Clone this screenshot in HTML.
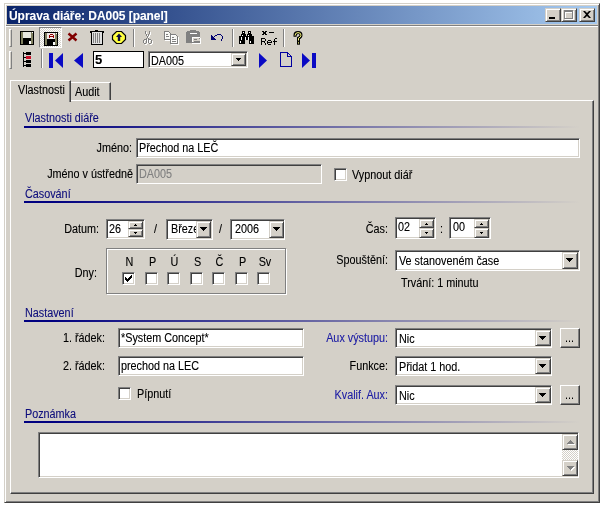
<!DOCTYPE html>
<html><head><meta charset="utf-8">
<style>
*{box-sizing:border-box;margin:0;padding:0}
html,body{width:606px;height:508px;overflow:hidden;background:#fff;position:relative}
body{font-family:"Liberation Sans",sans-serif;font-size:11px;color:#000}
.a{position:absolute}
.t{position:absolute;white-space:nowrap;line-height:13px;font-size:12px;margin-top:1px;filter:url(#crisp);transform:scaleX(0.9);transform-origin:0 0}
.r{text-align:right;transform-origin:100% 0}
.nav{color:#10107c}
.blu{color:#1c1ca4}
/* sunken field */
.fld{position:absolute;background:#fff;border:1px solid;border-color:#808080 #fff #fff #808080;box-shadow:inset 1px 1px #404040,inset -1px -1px #d4d0c8}
.fld.dis{background:#d4d0c8}
/* raised small button (scroll / combo) */
.btn{position:absolute;background:#d4d0c8;border:1px solid;border-color:#d4d0c8 #404040 #404040 #d4d0c8;box-shadow:inset 1px 1px #fff,inset -1px -1px #808080}
.pbtn{position:absolute;background:#d4d0c8;border:1px solid;border-color:#fff #404040 #404040 #fff;box-shadow:inset -1px -1px #808080}
.cb{position:absolute;width:13px;height:13px;background:#fff;border:1px solid;border-color:#808080 #fff #fff #808080;box-shadow:inset 1px 1px #404040,inset -1px -1px #d4d0c8}
.grip{position:absolute;width:3px;border-left:1px solid #fff;border-top:1px solid #fff;border-right:1px solid #808080;border-bottom:1px solid #808080}
.sep{position:absolute;width:2px;border-left:1px solid #808080;border-right:1px solid #fff}
.hline{position:absolute;height:2px;background:linear-gradient(to right,#000080 0%,#000080 5%,#d4d0c8 100%)}
.arr{position:absolute;width:0;height:0;border-left:3px solid transparent;border-right:3px solid transparent}
.dn{border-top:3px solid #000}
.up{border-bottom:3px solid #000}
svg{position:absolute;overflow:visible}
</style></head><body>
<svg width="0" height="0" style="position:absolute"><filter id="crisp" x="-5%" y="-5%" width="110%" height="110%"><feComponentTransfer><feFuncA type="gamma" amplitude="1" exponent="0.8" offset="0"/></feComponentTransfer></filter></svg>

<!-- window frame -->
<div class="a" style="left:4px;top:3px;width:596px;height:500px;background:#d4d0c8;border:1px solid;border-color:#d4d0c8 #404040 #404040 #d4d0c8;box-shadow:inset 1px 1px #fff,inset -1px -1px #808080"></div>

<!-- title bar -->
<div class="a" style="left:7px;top:6px;width:590px;height:18px;background:linear-gradient(to right,#0a246a,#a6caf0)"></div>
<div class="t" style="left:9px;top:8px;color:#fff;font-weight:bold;font-size:12px;line-height:14px;letter-spacing:-0.05px;transform:none">Úprava diáře: DA005 [panel]</div>
<div class="btn" style="left:545px;top:8px;width:16px;height:14px"><div class="a" style="left:3px;top:8px;width:6px;height:2px;background:#000"></div></div>
<div class="btn" style="left:561px;top:8px;width:16px;height:14px"><div class="a" style="left:3px;top:2px;width:9px;height:9px;border:1px solid #fff;border-top-width:2px"></div><div class="a" style="left:2px;top:1px;width:9px;height:9px;border:1px solid #808080;border-top-width:2px"></div></div>
<div class="btn" style="left:579px;top:8px;width:16px;height:14px">
<svg style="left:3px;top:2px" width="8" height="7" viewBox="0 0 8 7"><path d="M0 0h2l2 2 2-2h2L5 3.5 8 7H6L4 5 2 7H0l3-3.5z" fill="#000"/></svg></div>

<!-- toolbar top etched line -->
<div class="a" style="left:6px;top:25px;width:592px;height:1px;background:#808080"></div>
<div class="a" style="left:6px;top:26px;width:592px;height:1px;background:#fff"></div>

<!-- toolbar row 1 -->
<div class="grip" style="left:9px;top:29px;height:18px"></div>
<!-- save -->
<svg style="left:20px;top:31px" width="14" height="14" viewBox="0 0 14 14" shape-rendering="crispEdges">
<rect x="0" y="0" width="14" height="14" fill="#000"/>
<rect x="1" y="1" width="12" height="12" fill="#808060"/>
<rect x="3" y="1" width="8" height="6" fill="#e8e8e0"/>
<rect x="3" y="7" width="8" height="6" fill="#000"/>
<rect x="9" y="10" width="2" height="3" fill="#fff"/>
<rect x="12" y="1" width="1" height="1" fill="#fff"/>
</svg>
<!-- checked save-as button -->
<div class="a" style="left:39px;top:27px;width:23px;height:21px;border:1px solid;border-color:#808080 #fff #fff #808080;background-color:#e8e6e0;background-image:repeating-conic-gradient(#fff 0 25%,#d4d0c8 0 50%);background-size:2px 2px"></div>
<svg style="left:44px;top:32px" width="14" height="14" viewBox="0 0 14 14" shape-rendering="crispEdges">
<rect x="0" y="0" width="14" height="14" fill="#000"/>
<rect x="1" y="1" width="12" height="12" fill="#808060"/>
<rect x="3" y="1" width="8" height="6" fill="#f0e8e8"/>
<path d="M6 2h3v1h-3zM5 3h1v3h-1zM9 3h1v3h-1zM6 4h3v1h-3z" fill="#900000"/>
<rect x="3" y="7" width="8" height="6" fill="#000"/>
<rect x="9" y="10" width="2" height="3" fill="#fff"/>
<rect x="12" y="1" width="1" height="1" fill="#fff"/>
</svg>
<!-- red x -->
<svg style="left:68px;top:33px" width="9" height="8" viewBox="0 0 9 8"><path d="M0.5 0.5L8.5 7.5M8.5 0.5L0.5 7.5" stroke="#800000" stroke-width="2.4"/></svg>
<!-- trash -->
<svg style="left:90px;top:30px" width="14" height="15" viewBox="0 0 14 15" shape-rendering="crispEdges">
<rect x="5" y="0" width="3" height="1" fill="#000"/>
<rect x="0" y="1" width="14" height="1" fill="#000"/>
<rect x="0" y="2" width="1" height="1" fill="#000"/><rect x="13" y="2" width="1" height="1" fill="#000"/>
<rect x="1" y="2" width="12" height="13" fill="#000"/>
<rect x="2" y="2" width="10" height="12" fill="#e0e0e0"/>
<rect x="3" y="3" width="1" height="10" fill="#808080"/>
<rect x="5" y="3" width="1" height="10" fill="#808080"/>
<rect x="7" y="3" width="1" height="10" fill="#808080"/>
<rect x="9" y="3" width="1" height="10" fill="#808080"/>
</svg>
<!-- octagon -->
<svg style="left:112px;top:31px" width="14" height="13" viewBox="0 0 14 13">
<path d="M4.5 0.5h5l4 4v4l-4 4h-5l-4-4v-4z" fill="#ffff40" stroke="#000" stroke-width="1.2"/>
<path d="M7 2.5L10 6H8.2v4H5.8V6H4z" fill="#101040"/>
</svg>
<div class="sep" style="left:133px;top:29px;height:18px"></div>
<!-- scissors (disabled) -->
<svg style="left:142px;top:30px" width="12" height="15" viewBox="0 0 12 15" shape-rendering="crispEdges"><path d="M4 2h1v1h-1zM8 2h1v1h-1zM4 3h1v1h-1zM8 3h1v1h-1zM4 4h1v1h-1zM8 4h1v1h-1zM5 5h1v1h-1zM7 5h1v1h-1zM5 6h1v1h-1zM7 6h1v1h-1zM6 7h1v1h-1zM6 8h1v1h-1zM5 9h1v1h-1zM7 9h1v1h-1zM3 10h1v1h-1zM4 10h1v1h-1zM5 10h1v1h-1zM7 10h1v1h-1zM8 10h1v1h-1zM9 10h1v1h-1zM2 11h1v1h-1zM5 11h1v1h-1zM7 11h1v1h-1zM10 11h1v1h-1zM2 12h1v1h-1zM5 12h1v1h-1zM7 12h1v1h-1zM10 12h1v1h-1zM2 13h1v1h-1zM5 13h1v1h-1zM7 13h1v1h-1zM10 13h1v1h-1zM3 14h1v1h-1zM4 14h1v1h-1zM8 14h1v1h-1zM9 14h1v1h-1z" fill="#fff"/><path d="M3 1h1v1h-1zM7 1h1v1h-1zM3 2h1v1h-1zM7 2h1v1h-1zM3 3h1v1h-1zM7 3h1v1h-1zM4 4h1v1h-1zM6 4h1v1h-1zM4 5h1v1h-1zM6 5h1v1h-1zM5 6h1v1h-1zM5 7h1v1h-1zM4 8h1v1h-1zM6 8h1v1h-1zM2 9h1v1h-1zM3 9h1v1h-1zM4 9h1v1h-1zM6 9h1v1h-1zM7 9h1v1h-1zM8 9h1v1h-1zM1 10h1v1h-1zM4 10h1v1h-1zM6 10h1v1h-1zM9 10h1v1h-1zM1 11h1v1h-1zM4 11h1v1h-1zM6 11h1v1h-1zM9 11h1v1h-1zM1 12h1v1h-1zM4 12h1v1h-1zM6 12h1v1h-1zM9 12h1v1h-1zM2 13h1v1h-1zM3 13h1v1h-1zM7 13h1v1h-1zM8 13h1v1h-1z" fill="#808080"/></svg>
<!-- copy -->
<svg style="left:164px;top:31px" width="16" height="14" viewBox="0 0 16 14" shape-rendering="crispEdges"><path d="M1 1h4v1h1v1h1v5h-6zM7 4h5v1h1v1h1v6h-7z" fill="#f4f4f0"/><path d="M1 1h1v1h-1zM2 1h1v1h-1zM3 1h1v1h-1zM4 1h1v1h-1zM5 1h1v1h-1zM1 2h1v1h-1zM6 2h1v1h-1zM1 3h1v1h-1zM7 3h1v1h-1zM1 4h1v1h-1zM3 4h1v1h-1zM4 4h1v1h-1zM7 4h1v1h-1zM8 4h1v1h-1zM9 4h1v1h-1zM10 4h1v1h-1zM11 4h1v1h-1zM12 4h1v1h-1zM1 5h1v1h-1zM7 5h1v1h-1zM13 5h1v1h-1zM1 6h1v1h-1zM3 6h1v1h-1zM4 6h1v1h-1zM5 6h1v1h-1zM7 6h1v1h-1zM14 6h1v1h-1zM1 7h1v1h-1zM7 7h1v1h-1zM9 7h1v1h-1zM10 7h1v1h-1zM14 7h1v1h-1zM1 8h1v1h-1zM7 8h1v1h-1zM14 8h1v1h-1zM1 9h1v1h-1zM2 9h1v1h-1zM3 9h1v1h-1zM4 9h1v1h-1zM5 9h1v1h-1zM6 9h1v1h-1zM7 9h1v1h-1zM9 9h1v1h-1zM10 9h1v1h-1zM11 9h1v1h-1zM12 9h1v1h-1zM14 9h1v1h-1zM7 10h1v1h-1zM14 10h1v1h-1zM7 11h1v1h-1zM9 11h1v1h-1zM10 11h1v1h-1zM11 11h1v1h-1zM12 11h1v1h-1zM14 11h1v1h-1zM7 12h1v1h-1zM14 12h1v1h-1zM7 13h1v1h-1zM8 13h1v1h-1zM9 13h1v1h-1zM10 13h1v1h-1zM11 13h1v1h-1zM12 13h1v1h-1zM13 13h1v1h-1zM14 13h1v1h-1z" fill="#fff"/><path d="M0 0h1v1h-1zM1 0h1v1h-1zM2 0h1v1h-1zM3 0h1v1h-1zM4 0h1v1h-1zM0 1h1v1h-1zM5 1h1v1h-1zM0 2h1v1h-1zM6 2h1v1h-1zM0 3h1v1h-1zM2 3h1v1h-1zM3 3h1v1h-1zM6 3h1v1h-1zM7 3h1v1h-1zM8 3h1v1h-1zM9 3h1v1h-1zM10 3h1v1h-1zM11 3h1v1h-1zM0 4h1v1h-1zM6 4h1v1h-1zM12 4h1v1h-1zM0 5h1v1h-1zM2 5h1v1h-1zM3 5h1v1h-1zM4 5h1v1h-1zM6 5h1v1h-1zM13 5h1v1h-1zM0 6h1v1h-1zM6 6h1v1h-1zM8 6h1v1h-1zM9 6h1v1h-1zM13 6h1v1h-1zM0 7h1v1h-1zM6 7h1v1h-1zM13 7h1v1h-1zM0 8h1v1h-1zM1 8h1v1h-1zM2 8h1v1h-1zM3 8h1v1h-1zM4 8h1v1h-1zM5 8h1v1h-1zM6 8h1v1h-1zM8 8h1v1h-1zM9 8h1v1h-1zM10 8h1v1h-1zM11 8h1v1h-1zM13 8h1v1h-1zM6 9h1v1h-1zM13 9h1v1h-1zM6 10h1v1h-1zM8 10h1v1h-1zM9 10h1v1h-1zM10 10h1v1h-1zM11 10h1v1h-1zM13 10h1v1h-1zM6 11h1v1h-1zM13 11h1v1h-1zM6 12h1v1h-1zM7 12h1v1h-1zM8 12h1v1h-1zM9 12h1v1h-1zM10 12h1v1h-1zM11 12h1v1h-1zM12 12h1v1h-1zM13 12h1v1h-1z" fill="#808080"/></svg>
<!-- paste -->
<svg style="left:186px;top:30px" width="16" height="14" viewBox="0 0 16 14" shape-rendering="crispEdges">
<path d="M1 1h12v1h1v11h-14v-11h1z" fill="#808080"/>
<rect x="4" y="0" width="6" height="1" fill="#808080"/>
<rect x="4" y="3" width="7" height="1" fill="#fff"/>
<rect x="6" y="7" width="8" height="6" fill="#fff"/>
<rect x="7" y="8" width="7" height="5" fill="#d4d0c8"/>
<path d="M14 8h1v5h-1zM6 13h9v1h-9z" fill="#fff"/>
<rect x="13" y="8" width="1" height="1" fill="#808080"/>
<rect x="8" y="9" width="3" height="1" fill="#808080"/>
<rect x="8" y="11" width="6" height="1" fill="#808080"/>
<rect x="6" y="12" width="8" height="1" fill="#808080"/>
</svg>
<!-- undo -->
<svg style="left:211px;top:34px" width="12" height="7" viewBox="0 0 12 7" shape-rendering="crispEdges"><path d="M6 0h1v1h-1zM7 0h1v1h-1zM8 0h1v1h-1zM9 0h1v1h-1zM0 1h1v1h-1zM4 1h1v1h-1zM5 1h1v1h-1zM10 1h1v1h-1zM0 2h1v1h-1zM1 2h1v1h-1zM3 2h1v1h-1zM11 2h1v1h-1zM0 3h1v1h-1zM1 3h1v1h-1zM2 3h1v1h-1zM11 3h1v1h-1zM0 4h1v1h-1zM1 4h1v1h-1zM2 4h1v1h-1zM3 4h1v1h-1zM11 4h1v1h-1zM0 5h1v1h-1zM1 5h1v1h-1zM2 5h1v1h-1zM3 5h1v1h-1zM4 5h1v1h-1zM10 5h1v1h-1zM10 6h1v1h-1z" fill="#000070"/></svg>
<div class="sep" style="left:232px;top:29px;height:18px"></div>
<!-- binoculars -->
<svg style="left:239px;top:31px" width="15" height="13" viewBox="0 0 15 13" shape-rendering="crispEdges"><path d="M3 0h1v1h-1zM4 0h1v1h-1zM5 0h1v1h-1zM9 0h1v1h-1zM10 0h1v1h-1zM11 0h1v1h-1zM3 1h1v1h-1zM5 1h1v1h-1zM9 1h1v1h-1zM11 1h1v1h-1zM3 2h1v1h-1zM4 2h1v1h-1zM5 2h1v1h-1zM9 2h1v1h-1zM10 2h1v1h-1zM11 2h1v1h-1zM2 3h1v1h-1zM3 3h1v1h-1zM4 3h1v1h-1zM5 3h1v1h-1zM6 3h1v1h-1zM8 3h1v1h-1zM9 3h1v1h-1zM10 3h1v1h-1zM11 3h1v1h-1zM12 3h1v1h-1zM2 4h1v1h-1zM4 4h1v1h-1zM5 4h1v1h-1zM6 4h1v1h-1zM8 4h1v1h-1zM10 4h1v1h-1zM11 4h1v1h-1zM12 4h1v1h-1zM0 5h1v1h-1zM1 5h1v1h-1zM2 5h1v1h-1zM3 5h1v1h-1zM4 5h1v1h-1zM5 5h1v1h-1zM6 5h1v1h-1zM7 5h1v1h-1zM8 5h1v1h-1zM9 5h1v1h-1zM10 5h1v1h-1zM11 5h1v1h-1zM12 5h1v1h-1zM13 5h1v1h-1zM14 5h1v1h-1zM0 6h1v1h-1zM1 6h1v1h-1zM3 6h1v1h-1zM4 6h1v1h-1zM5 6h1v1h-1zM7 6h1v1h-1zM8 6h1v1h-1zM10 6h1v1h-1zM11 6h1v1h-1zM12 6h1v1h-1zM13 6h1v1h-1zM14 6h1v1h-1zM0 7h1v1h-1zM1 7h1v1h-1zM3 7h1v1h-1zM4 7h1v1h-1zM5 7h1v1h-1zM7 7h1v1h-1zM8 7h1v1h-1zM10 7h1v1h-1zM11 7h1v1h-1zM12 7h1v1h-1zM13 7h1v1h-1zM14 7h1v1h-1zM0 8h1v1h-1zM1 8h1v1h-1zM3 8h1v1h-1zM4 8h1v1h-1zM5 8h1v1h-1zM7 8h1v1h-1zM8 8h1v1h-1zM10 8h1v1h-1zM11 8h1v1h-1zM12 8h1v1h-1zM13 8h1v1h-1zM14 8h1v1h-1zM0 9h1v1h-1zM1 9h1v1h-1zM2 9h1v1h-1zM3 9h1v1h-1zM4 9h1v1h-1zM5 9h1v1h-1zM10 9h1v1h-1zM11 9h1v1h-1zM12 9h1v1h-1zM13 9h1v1h-1zM14 9h1v1h-1zM0 10h1v1h-1zM2 10h1v1h-1zM3 10h1v1h-1zM4 10h1v1h-1zM5 10h1v1h-1zM10 10h1v1h-1zM12 10h1v1h-1zM13 10h1v1h-1zM14 10h1v1h-1zM0 11h1v1h-1zM2 11h1v1h-1zM3 11h1v1h-1zM4 11h1v1h-1zM5 11h1v1h-1zM10 11h1v1h-1zM12 11h1v1h-1zM13 11h1v1h-1zM14 11h1v1h-1zM0 12h1v1h-1zM1 12h1v1h-1zM2 12h1v1h-1zM3 12h1v1h-1zM4 12h1v1h-1zM5 12h1v1h-1zM10 12h1v1h-1zM11 12h1v1h-1zM12 12h1v1h-1zM13 12h1v1h-1zM14 12h1v1h-1z" fill="#000"/><path d="M4 1h1v1h-1zM10 1h1v1h-1zM3 4h1v1h-1zM9 4h1v1h-1zM2 6h1v1h-1zM6 6h1v1h-1zM9 6h1v1h-1zM2 7h1v1h-1zM6 7h1v1h-1zM9 7h1v1h-1zM2 8h1v1h-1zM6 8h1v1h-1zM9 8h1v1h-1zM1 10h1v1h-1zM11 10h1v1h-1zM1 11h1v1h-1zM11 11h1v1h-1z" fill="#fff"/></svg>
<!-- x-Ref -->
<svg style="left:261px;top:31px" width="16" height="14" viewBox="0 0 16 14" shape-rendering="crispEdges"><path d="M1 0h2v1h-2zM4 0h2v1h-2zM2 1h3v1h-3zM8 1h5v1h-5zM2 2h3v1h-3zM1 3h2v1h-2zM4 3h2v1h-2zM0 7h4v1h-4zM14 7h2v1h-2zM0 8h1v1h-1zM4 8h1v1h-1zM13 8h1v1h-1zM0 9h1v1h-1zM4 9h1v1h-1zM7 9h3v1h-3zM13 9h1v1h-1zM0 10h4v1h-4zM6 10h1v1h-1zM10 10h1v1h-1zM12 10h4v1h-4zM0 11h1v1h-1zM3 11h1v1h-1zM6 11h5v1h-5zM13 11h1v1h-1zM0 12h1v1h-1zM4 12h1v1h-1zM6 12h1v1h-1zM13 12h1v1h-1zM0 13h1v1h-1zM4 13h1v1h-1zM7 13h3v1h-3zM13 13h1v1h-1z" fill="#000"/></svg>
<div class="sep" style="left:283px;top:29px;height:18px"></div>
<!-- help ? -->
<svg style="left:293px;top:31px" width="10" height="14" viewBox="0 0 10 14">
<g fill="none" stroke-linecap="square"><path d="M2 4.2Q2 1.6 5 1.6Q8 1.6 8 4.2Q8 6 5.5 7.2V9" stroke="#000" stroke-width="3"/><path d="M5.5 11.6V12.2" stroke="#000" stroke-width="3"/>
<path d="M2 4.2Q2 1.6 5 1.6Q8 1.6 8 4.2Q8 6 5.5 7.2V9" stroke="#ffff80" stroke-width="1"/><path d="M5.5 11.8V12" stroke="#ffff80" stroke-width="1"/></g>
</svg>

<!-- toolbar row 2 -->
<div class="grip" style="left:9px;top:51px;height:18px"></div>
<svg style="left:23px;top:52px" width="8" height="15" viewBox="0 0 8 15" shape-rendering="crispEdges">
<rect x="0" y="0" width="1" height="15" fill="#000"/>
<rect x="3" y="0" width="5" height="3" fill="#000"/>
<rect x="3" y="4" width="5" height="3" fill="#c8102a"/>
<rect x="3" y="8" width="5" height="3" fill="#000"/>
<rect x="3" y="12" width="5" height="3" fill="#000"/>
<rect x="1" y="1" width="2" height="1" fill="#000"/><rect x="1" y="5" width="2" height="1" fill="#000"/><rect x="1" y="9" width="2" height="1" fill="#000"/><rect x="1" y="13" width="2" height="1" fill="#000"/>
</svg>
<div class="sep" style="left:41px;top:49px;height:19px"></div>
<svg style="left:49px;top:53px" width="14" height="15" viewBox="0 0 14 15">
<rect x="0" y="0" width="4" height="15" fill="#0a0ac4"/>
<path d="M6 7.5L14 0V15z" fill="#0a0ac4"/>
</svg>
<svg style="left:74px;top:53px" width="9" height="15" viewBox="0 0 9 15"><path d="M0 7.5L9 0V15z" fill="#0a0ac4"/></svg>
<div class="a" style="left:93px;top:51px;width:51px;height:17px;background:#fff;border:1px solid #000"></div>
<div class="t" style="left:95px;top:52px;font-weight:bold;font-size:13px;line-height:13px;transform:none">5</div>
<div class="fld" style="left:148px;top:51px;width:100px;height:17px"></div>
<div class="t" style="left:151px;top:54px;">DA005</div>
<div class="btn" style="left:231px;top:53px;width:15px;height:13px"><svg style="left:4px;top:4px" width="5" height="3" viewBox="0 0 5 3" shape-rendering="crispEdges"><path d="M0 0h5v1h-1v1h-1v1h-1v-1h-1v-1h-1z" fill="#000"/></svg></div>
<svg style="left:259px;top:53px" width="8" height="15" viewBox="0 0 8 15"><path d="M8 7.5L0 0V15z" fill="#0a0ac4"/></svg>
<svg style="left:280px;top:52px" width="12" height="15" viewBox="0 0 12 15" shape-rendering="crispEdges">
<path d="M0.5 0.5H7.5L11.5 4.5V14.5H0.5z" fill="#d4d0c8" stroke="#0000a0"/>
<path d="M7.5 0.5V4.5H11.5" fill="none" stroke="#0000a0"/>
</svg>
<svg style="left:302px;top:53px" width="14" height="15" viewBox="0 0 14 15">
<path d="M8 7.5L0 0V15z" fill="#0a0ac4"/>
<rect x="10" y="0" width="4" height="15" fill="#0a0ac4"/>
</svg>

<!-- tabs -->
<div class="a" style="left:10px;top:100px;width:584px;height:394px;border:1px solid;border-color:#fff #404040 #404040 #fff;box-shadow:inset -1px -1px #808080"></div>
<div class="a" style="left:71px;top:82px;width:40px;height:18px;border-top:1px solid #fff;border-right:1px solid #404040;box-shadow:inset -1px 0 #808080"></div>
<div class="t" style="left:75px;top:85px">Audit</div>
<div class="a" style="left:10px;top:80px;width:61px;height:22px;background:#d4d0c8;border-top:1px solid #fff;border-left:1px solid #fff;border-right:1px solid #404040;box-shadow:inset -1px 0 #808080"></div>
<div class="t" style="left:18px;top:83px">Vlastnosti</div>

<!-- Vlastnosti diare -->
<div class="t nav" style="left:25px;top:111px">Vlastnosti diáře</div>
<div class="hline" style="left:24px;top:126px;width:556px"></div>
<div class="t r" style="left:40px;top:141px;width:92px">Jméno:</div>
<div class="fld" style="left:136px;top:138px;width:444px;height:20px"></div>
<div class="t" style="left:139px;top:141px">Přechod na LEČ</div>
<div class="t r" style="left:20px;top:167px;width:113px">Jméno v ústředně</div>
<div class="fld dis" style="left:136px;top:164px;width:186px;height:20px"></div>
<div class="t" style="left:139px;top:167px;color:#808080">DA005</div>
<div class="cb" style="left:334px;top:168px"></div>
<div class="t" style="left:352px;top:168px">Vypnout diář</div>

<!-- Casovani -->
<div class="t nav" style="left:25px;top:187px">Časování</div>
<div class="hline" style="left:24px;top:201px;width:556px"></div>
<div class="t r" style="left:40px;top:222px;width:59px">Datum:</div>
<div class="fld" style="left:106px;top:219px;width:39px;height:20px"></div>
<div class="t" style="left:109px;top:222px">26</div>
<div class="btn" style="left:128px;top:221px;width:15px;height:8px"><svg style="left:5px;top:2px" width="3" height="2" viewBox="0 0 3 2" shape-rendering="crispEdges"><path d="M1 0h1v1h1v1h-3v-1h1z" fill="#000"/></svg></div>
<div class="btn" style="left:128px;top:229px;width:15px;height:8px"><svg style="left:5px;top:2px" width="3" height="2" viewBox="0 0 3 2" shape-rendering="crispEdges"><path d="M0 0h3v1h-1v1h-1v-1h-1z" fill="#000"/></svg></div>
<div class="t" style="left:154px;top:222px">/</div>
<div class="fld" style="left:166px;top:219px;width:47px;height:21px"></div>
<div class="a" style="left:168px;top:221px;width:28px;height:16px;overflow:hidden"><div class="t" style="left:3px;top:1px">Březen</div></div>
<div class="btn" style="left:196px;top:221px;width:15px;height:17px"><svg style="left:3px;top:5px" width="7" height="4" viewBox="0 0 7 4" shape-rendering="crispEdges"><path d="M0 0h7v1h-1v1h-1v1h-1v1h-1v-1h-1v-1h-1v-1h-1z" fill="#000"/></svg></div>
<div class="t" style="left:219px;top:222px">/</div>
<div class="fld" style="left:230px;top:219px;width:55px;height:21px"></div>
<div class="t" style="left:235px;top:222px">2006</div>
<div class="btn" style="left:269px;top:221px;width:15px;height:17px"><svg style="left:3px;top:5px" width="7" height="4" viewBox="0 0 7 4" shape-rendering="crispEdges"><path d="M0 0h7v1h-1v1h-1v1h-1v1h-1v-1h-1v-1h-1v-1h-1z" fill="#000"/></svg></div>

<div class="a" style="left:106px;top:248px;width:180px;height:46px;border:1px solid #808080;box-shadow:1px 1px #fff,inset 1px 1px #fff"></div>
<div class="t r" style="left:50px;top:266px;width:47px">Dny:</div>
<div class="t" style="left:123px;top:255px;width:13px;text-align:center;transform-origin:50% 0">N</div>
<div class="t" style="left:146px;top:255px;width:13px;text-align:center;transform-origin:50% 0">P</div>
<div class="t" style="left:168px;top:255px;width:13px;text-align:center;transform-origin:50% 0">Ú</div>
<div class="t" style="left:191px;top:255px;width:13px;text-align:center;transform-origin:50% 0">S</div>
<div class="t" style="left:213px;top:255px;width:13px;text-align:center;transform-origin:50% 0">Č</div>
<div class="t" style="left:236px;top:255px;width:13px;text-align:center;transform-origin:50% 0">P</div>
<div class="t" style="left:258px;top:255px;width:13px;text-align:center;transform-origin:50% 0">Sv</div>
<div class="cb" style="left:122px;top:272px"><svg style="left:2px;top:2px" width="7" height="7" viewBox="0 0 7 7" shape-rendering="crispEdges"><path d="M0 2h1v1h1v1h1v-1h1v-1h1v-1h1v-1h1v3h-1v1h-1v1h-1v1h-1v1h-1v-1h-1v-1h-1z" fill="#000"/></svg></div>
<div class="cb" style="left:145px;top:272px"></div>
<div class="cb" style="left:167px;top:272px"></div>
<div class="cb" style="left:190px;top:272px"></div>
<div class="cb" style="left:212px;top:272px"></div>
<div class="cb" style="left:235px;top:272px"></div>
<div class="cb" style="left:257px;top:272px"></div>

<div class="t r" style="left:340px;top:222px;width:48px">Čas:</div>
<div class="fld" style="left:395px;top:217px;width:41px;height:22px"></div>
<div class="t" style="left:398px;top:220px">02</div>
<div class="btn" style="left:419px;top:219px;width:15px;height:9px"><svg style="left:5px;top:3px" width="3" height="2" viewBox="0 0 3 2" shape-rendering="crispEdges"><path d="M1 0h1v1h1v1h-3v-1h1z" fill="#000"/></svg></div>
<div class="btn" style="left:419px;top:228px;width:15px;height:10px"><svg style="left:5px;top:3px" width="3" height="2" viewBox="0 0 3 2" shape-rendering="crispEdges"><path d="M0 0h3v1h-1v1h-1v-1h-1z" fill="#000"/></svg></div>
<div class="t" style="left:440px;top:222px">:</div>
<div class="fld" style="left:449px;top:217px;width:42px;height:22px"></div>
<div class="t" style="left:453px;top:220px">00</div>
<div class="btn" style="left:474px;top:219px;width:15px;height:9px"><svg style="left:5px;top:3px" width="3" height="2" viewBox="0 0 3 2" shape-rendering="crispEdges"><path d="M1 0h1v1h1v1h-3v-1h1z" fill="#000"/></svg></div>
<div class="btn" style="left:474px;top:228px;width:15px;height:10px"><svg style="left:5px;top:3px" width="3" height="2" viewBox="0 0 3 2" shape-rendering="crispEdges"><path d="M0 0h3v1h-1v1h-1v-1h-1z" fill="#000"/></svg></div>

<div class="t r" style="left:320px;top:253px;width:68px">Spouštění:</div>
<div class="fld" style="left:395px;top:250px;width:185px;height:21px"></div>
<div class="t" style="left:399px;top:254px">Ve stanoveném čase</div>
<div class="btn" style="left:562px;top:252px;width:16px;height:17px"><svg style="left:3px;top:5px" width="7" height="4" viewBox="0 0 7 4" shape-rendering="crispEdges"><path d="M0 0h7v1h-1v1h-1v1h-1v1h-1v-1h-1v-1h-1v-1h-1z" fill="#000"/></svg></div>
<div class="t" style="left:401px;top:276px">Trvání: 1 minutu</div>

<!-- Nastaveni -->
<div class="t nav" style="left:25px;top:306px">Nastavení</div>
<div class="hline" style="left:24px;top:320px;width:556px"></div>
<div class="t r" style="left:40px;top:331px;width:65px">1. řádek:</div>
<div class="fld" style="left:118px;top:328px;width:186px;height:20px"></div>
<div class="t" style="left:121px;top:331px">*System Concept*</div>
<div class="t r" style="left:40px;top:359px;width:65px">2. řádek:</div>
<div class="fld" style="left:118px;top:356px;width:186px;height:20px"></div>
<div class="t" style="left:121px;top:359px">prechod na LEC</div>
<div class="cb" style="left:118px;top:387px"></div>
<div class="t" style="left:137px;top:387px">Pípnutí</div>

<div class="t r blu" style="left:300px;top:331px;width:88px">Aux výstupu:</div>
<div class="fld" style="left:395px;top:328px;width:157px;height:20px"></div>
<div class="t" style="left:399px;top:332px">Nic</div>
<div class="btn" style="left:535px;top:330px;width:16px;height:16px"><svg style="left:3px;top:5px" width="7" height="4" viewBox="0 0 7 4" shape-rendering="crispEdges"><path d="M0 0h7v1h-1v1h-1v1h-1v1h-1v-1h-1v-1h-1v-1h-1z" fill="#000"/></svg></div>
<div class="pbtn" style="left:560px;top:328px;width:20px;height:20px"><div class="t" style="left:4px;top:2px">...</div></div>

<div class="t r" style="left:300px;top:359px;width:88px">Funkce:</div>
<div class="fld" style="left:395px;top:356px;width:157px;height:20px"></div>
<div class="t" style="left:399px;top:360px">Přidat 1 hod.</div>
<div class="btn" style="left:535px;top:358px;width:16px;height:16px"><svg style="left:3px;top:5px" width="7" height="4" viewBox="0 0 7 4" shape-rendering="crispEdges"><path d="M0 0h7v1h-1v1h-1v1h-1v1h-1v-1h-1v-1h-1v-1h-1z" fill="#000"/></svg></div>

<div class="t r blu" style="left:300px;top:388px;width:88px">Kvalif. Aux:</div>
<div class="fld" style="left:395px;top:385px;width:157px;height:20px"></div>
<div class="t" style="left:399px;top:389px">Nic</div>
<div class="btn" style="left:535px;top:387px;width:16px;height:16px"><svg style="left:3px;top:5px" width="7" height="4" viewBox="0 0 7 4" shape-rendering="crispEdges"><path d="M0 0h7v1h-1v1h-1v1h-1v1h-1v-1h-1v-1h-1v-1h-1z" fill="#000"/></svg></div>
<div class="pbtn" style="left:560px;top:385px;width:20px;height:20px"><div class="t" style="left:4px;top:2px">...</div></div>

<!-- Poznamka -->
<div class="t nav" style="left:25px;top:407px">Poznámka</div>
<div class="hline" style="left:24px;top:421px;width:556px"></div>
<div class="fld" style="left:38px;top:432px;width:541px;height:46px"></div>
<div class="btn" style="left:562px;top:434px;width:16px;height:16px"><svg style="left:4px;top:5px" width="8" height="5" viewBox="0 0 8 5" shape-rendering="crispEdges"><path d="M4 1h1v1h1v1h1v1h1v1H1v-1h1v-1h1v-1h1z" fill="#fff"/><path d="M3 0h1v1h1v1h1v1h1v1H0v-1h1v-1h1v-1h1z" fill="#808080"/></svg></div>
<div class="a" style="left:562px;top:450px;width:16px;height:10px;background-color:#e8e6e0;background-image:repeating-conic-gradient(#fff 0 25%,#d4d0c8 0 50%);background-size:2px 2px"></div>
<div class="btn" style="left:562px;top:460px;width:16px;height:16px"><svg style="left:4px;top:5px" width="8" height="5" viewBox="0 0 8 5" shape-rendering="crispEdges"><path d="M1 1h7v1h-1v1h-1v1h-1v1h-1v-1h-1v-1h-1v-1h-1z" fill="#fff"/><path d="M0 0h7v1h-1v1h-1v1h-1v1h-1v-1h-1v-1h-1v-1h-1z" fill="#808080"/></svg></div>

</body></html>
